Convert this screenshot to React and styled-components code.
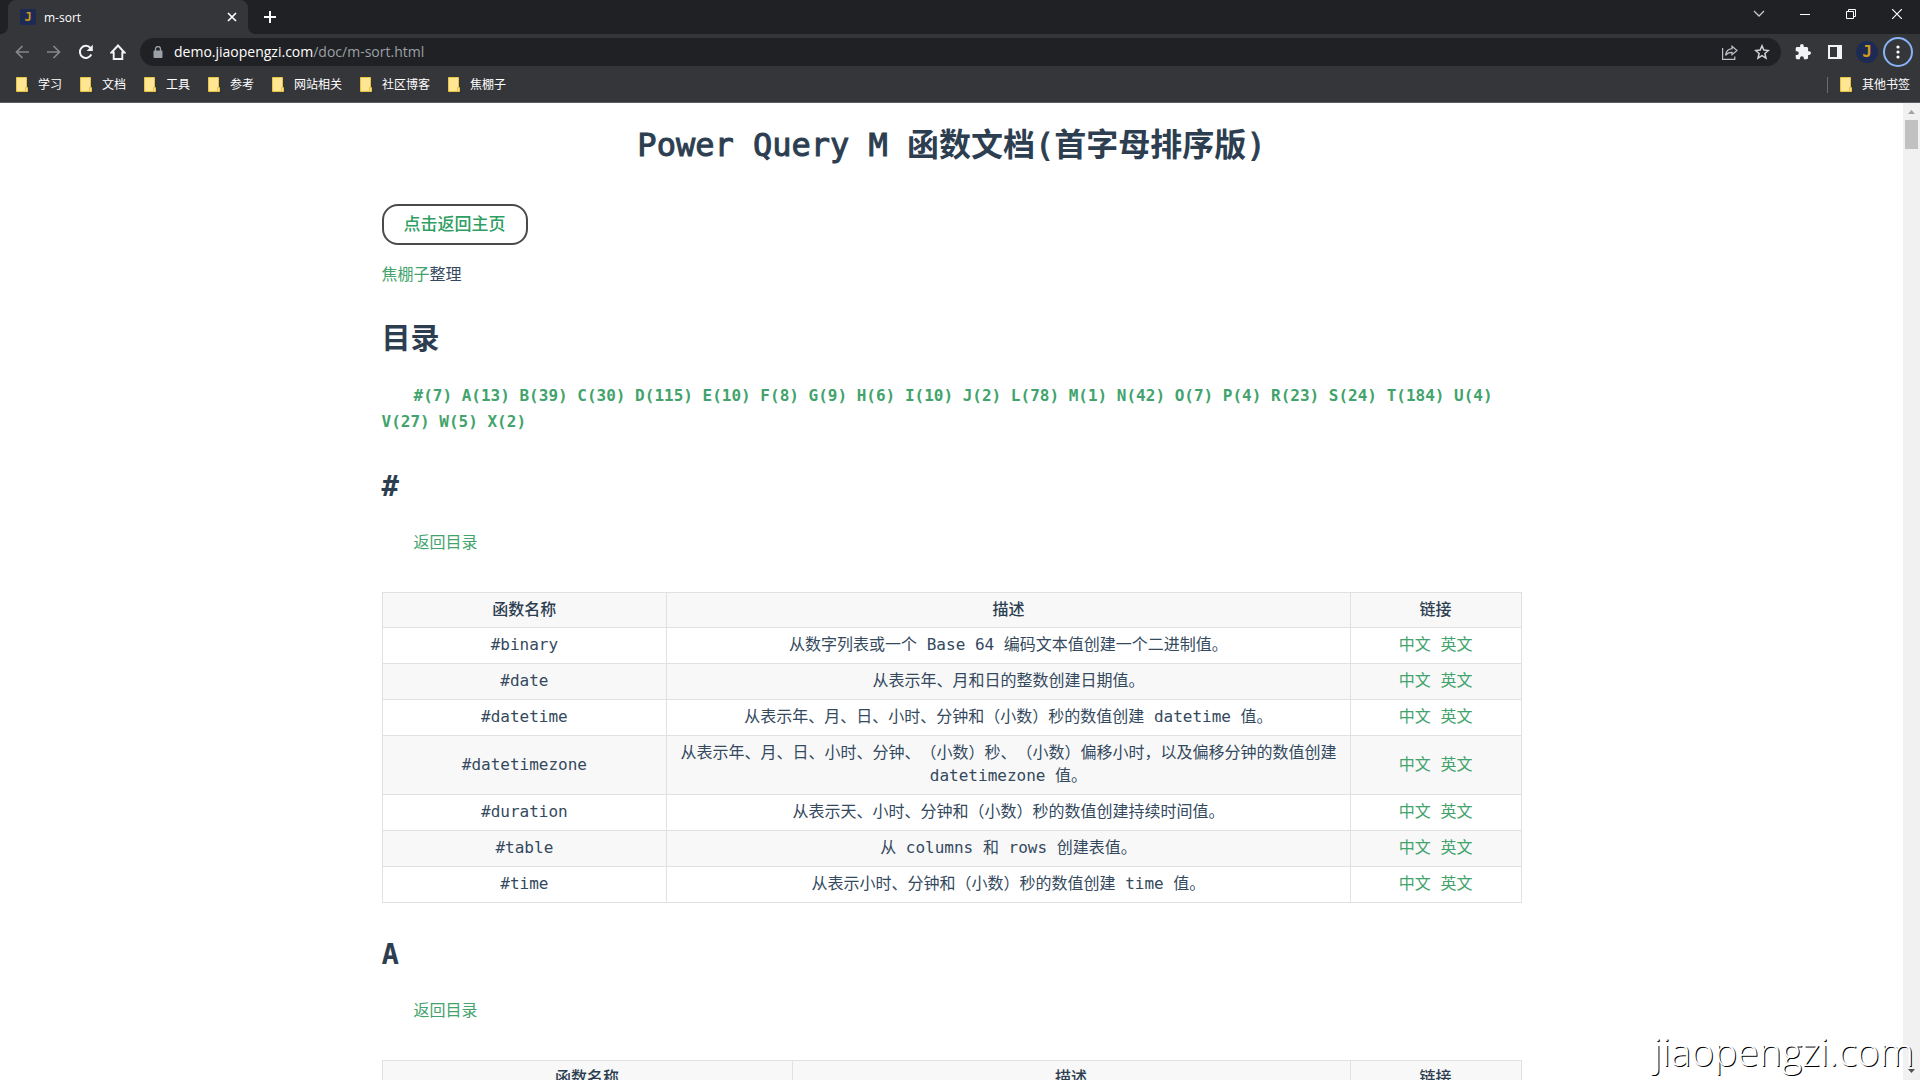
import React from 'react'
import styled, { createGlobalStyle } from 'styled-components';

const bookmarks = ['学习', '文档', '工具', '参考', '网站相关', '社区博客', '焦棚子'];

const toc = [
    '#(7)', 'A(13)', 'B(39)', 'C(30)', 'D(115)', 'E(10)', 'F(8)', 'G(9)', 'H(6)', 'I(10)', 'J(2)', 'L(78)',
    'M(1)', 'N(42)', 'O(7)', 'P(4)', 'R(23)', 'S(24)', 'T(184)', 'U(4)', 'V(27)', 'W(5)', 'X(2)'
];

const sections = [
    {
        letter: '#',
        columns: [25, 60, 15],
        rows: [
            ['#binary', '从数字列表或一个 Base 64 编码文本值创建一个二进制值。'],
            ['#date', '从表示年、月和日的整数创建日期值。'],
            ['#datetime', '从表示年、月、日、小时、分钟和（小数）秒的数值创建 datetime 值。'],
            ['#datetimezone', '从表示年、月、日、小时、分钟、（小数）秒、（小数）偏移小时，以及偏移分钟的数值创建 datetimezone 值。'],
            ['#duration', '从表示天、小时、分钟和（小数）秒的数值创建持续时间值。'],
            ['#table', '从 columns 和 rows 创建表值。'],
            ['#time', '从表示小时、分钟和（小数）秒的数值创建 time 值。']
        ]
    },
    {
        letter: 'A',
        columns: [36, 49, 15],
        rows: []
    }
];

const FolderIcon = () => (
    <svg width="12" height="15" viewBox="0 0 12 15" aria-hidden="true">
        <path d="M.5.5h10v10h1v4H.5z" fill="#ffe694" stroke="#e8c342" />
        <path d="M9.500 14v-3.500h1.500" fill="none" stroke="#e8c342" />
    </svg>
);

const TabStrip = () => (
    <Strip>
        <Tab>
            <Favicon>J</Favicon>
            <TabTitle>m-sort</TabTitle>
            <PlainButton aria-label="Close tab" $size={16}>
                <svg width="10" height="10" viewBox="0 0 10 10">
                    <path d="M1 1l8 8M9 1l-8 8" stroke="#fff" strokeWidth="1.700" />
                </svg>
            </PlainButton>
        </Tab>
        <NewTab aria-label="New tab">
            <svg width="12" height="12" viewBox="0 0 12 12">
                <path d="M6 0v12M0 6h12" stroke="#fff" strokeWidth="2" />
            </svg>
        </NewTab>
        <WindowControls>
            <WindowButton aria-label="Search tabs">
                <svg width="12" height="8" viewBox="0 0 12 8">
                    <path d="M1 1l5 5 5-5" fill="none" stroke="#c8c9ca" strokeWidth="1.300" />
                </svg>
            </WindowButton>
            <WindowButton aria-label="Minimize">
                <svg width="10" height="10" viewBox="0 0 10 10">
                    <path d="M0 5.500h10" stroke="#fff" />
                </svg>
            </WindowButton>
            <WindowButton aria-label="Restore">
                <svg width="10" height="10" viewBox="0 0 10 10">
                    <path d="M.5 2.500h7v7h-7zM2.500 2V.5h7v7H8" fill="none" stroke="#fff" />
                </svg>
            </WindowButton>
            <WindowButton aria-label="Close">
                <svg width="10" height="10" viewBox="0 0 10 10">
                    <path d="M0 0l10 10M10 0L0 10" stroke="#fff" strokeWidth="1.200" />
                </svg>
            </WindowButton>
        </WindowControls>
    </Strip>
);

const Toolbar = () => (
    <Bar>
        <PlainButton aria-label="Back" $size={32}>
            <svg width="14" height="14" viewBox="0 0 14 14">
                <path d="M14 7H1.500M7.500 1l-6 6 6 6" fill="none" stroke="#85878a" strokeWidth="1.700" />
            </svg>
        </PlainButton>
        <PlainButton aria-label="Forward" $size={32}>
            <svg width="14" height="14" viewBox="0 0 14 14">
                <path d="M0 7h12.500M6.500 1l6 6-6 6" fill="none" stroke="#85878a" strokeWidth="1.700" />
            </svg>
        </PlainButton>
        <PlainButton aria-label="Reload" $size={32}>
            <svg width="16" height="16" viewBox="0 0 16 16">
                <path d="M13.300 10.500A6 6 0 1 1 12.500 4" fill="none" stroke="#f1f3f4" strokeWidth="2" />
                <path d="M14.800.8v6.200H8.600z" fill="#f1f3f4" />
            </svg>
        </PlainButton>
        <PlainButton aria-label="Home" $size={32}>
            <svg width="16" height="16" viewBox="0 0 16 16">
                <path d="M1.500 8.500L8 1.500l6.500 7h-2.200V15H3.700V8.500z" fill="none" stroke="#f1f3f4" strokeWidth="1.900" />
            </svg>
        </PlainButton>
        <AddressBar>
            <svg width="10" height="12" viewBox="0 0 10 12" aria-hidden="true">
                <path d="M2.500 5V3a2.500 2.500 0 0 1 5 0v2" fill="none" stroke="#9aa0a6" strokeWidth="1.300" />
                <rect x="0.500" y="4.500" width="9" height="7.500" rx="1" fill="#9aa0a6" />
            </svg>
            <Address href="#top">demo.jiaopengzi.com<AddressPath>/doc/m-sort.html</AddressPath></Address>
            <PlainButton aria-label="Share" $size={32}>
                <svg width="16" height="15" viewBox="0 0 16 15">
                    <path d="M.6 3v11.400h12.200V11.500" fill="none" stroke="#bdc1c6" strokeWidth="1.200" />
                    <path d="M10 1.200L15 5.500l-5 4.300V7.400C7 7.300 5 8.200 3.500 10.300 4 6.500 6 4 10 3.600z" fill="none" stroke="#bdc1c6" strokeWidth="1.200" />
                </svg>
            </PlainButton>
            <PlainButton aria-label="Bookmark this page" $size={32}>
                <svg width="16" height="16" viewBox="0 0 16 16">
                    <path d="M8 1.800l1.800 4.300 4.600.4-3.500 3 1.100 4.600L8 11.700l-4 2.400 1.100-4.600-3.500-3 4.600-.4z" fill="none" stroke="#d0d2d5" strokeWidth="1.500" />
                </svg>
            </PlainButton>
        </AddressBar>
        <PlainButton aria-label="Extensions" $size={32}>
            <svg width="16" height="16" viewBox="1 1 22 22">
                <path d="M20.500 11H19V7c0-1.100-.9-2-2-2h-4V3.500a2.500 2.500 0 0 0-5 0V5H4c-1.100 0-2 .9-2 2v3.800h1.500a2.700 2.700 0 0 1 0 5.400H2V20c0 1.100.9 2 2 2h3.800v-1.500a2.700 2.700 0 0 1 5.400 0V22H17c1.100 0 2-.9 2-2v-4h1.500a2.500 2.500 0 0 0 0-5z" fill="#f1f3f4" />
            </svg>
        </PlainButton>
        <PlainButton aria-label="Side panel" $size={32}>
            <svg width="14" height="14" viewBox="0 0 14 14">
                <path d="M0 0h14v14H0zM2 2v10h7V2z" fill="#f1f3f4" fillRule="evenodd" />
            </svg>
        </PlainButton>
        <PlainButton aria-label="Profile" $size={32}>
            <Avatar>J</Avatar>
        </PlainButton>
        <MenuButton aria-label="Menu">
            <svg width="4" height="14" viewBox="0 0 4 14">
                <circle cx="2" cy="2" r="1.600" fill="#fff" />
                <circle cx="2" cy="7" r="1.600" fill="#fff" />
                <circle cx="2" cy="12" r="1.600" fill="#fff" />
            </svg>
        </MenuButton>
    </Bar>
);

const FunctionTable = ({ columns, rows }) => (
    <Table>
        <colgroup>
            {columns.map((width, i) => <col key={i} width={`${width}%`} />)}
        </colgroup>
        <thead>
            <tr>
                <HeadCell>函数名称</HeadCell>
                <HeadCell>描述</HeadCell>
                <HeadCell>链接</HeadCell>
            </tr>
        </thead>
        <tbody>
            {rows.map(([name, text]) => (
                <Row key={name}>
                    <Cell>{name}</Cell>
                    <Cell>{text}</Cell>
                    <Cell><Link href="#zh">中文</Link> <Link href="#en">英文</Link></Cell>
                </Row>
            ))}
        </tbody>
    </Table>
);

export default function App() {
    return (
        <Window>
            <GlobalStyle />
            <TabStrip />
            <Toolbar />
            <BookmarkBar>
                {bookmarks.map(name => (
                    <Bookmark key={name} href="#bookmark"><FolderIcon />{name}</Bookmark>
                ))}
                <OtherBookmarks>
                    <Bookmark href="#bookmark"><FolderIcon />其他书签</Bookmark>
                </OtherBookmarks>
            </BookmarkBar>
            <Viewport>
                <Page>
                    <Article>
                        <Title><Latin>Power Query M </Latin>函数文档<Latin>(</Latin>首字母排序版<Latin>)</Latin></Title>
                        <HomeButton>点击返回主页</HomeButton>
                        <Author><Link href="#author">焦棚子</Link>整理</Author>
                        <Heading id="toc">目录</Heading>
                        <Toc>
                            {toc.map(item => (
                                <React.Fragment key={item}><TocLink href={`#${item[0]}`}>{item}</TocLink>{' '}</React.Fragment>
                            ))}
                        </Toc>
                        {sections.map(({ letter, columns, rows }) => (
                            <section key={letter}>
                                <Heading>{letter}</Heading>
                                <BackLine><Link href="#toc">返回目录</Link></BackLine>
                                <FunctionTable columns={columns} rows={rows} />
                            </section>
                        ))}
                    </Article>
                </Page>
                <ScrollTrack>
                    <svg width="7" height="4" viewBox="0 0 7 4"><path d="M0 4l3.500-4L7 4z" fill="#a3a3a3" /></svg>
                    <ScrollThumb />
                    <svg width="7" height="4" viewBox="0 0 7 4"><path d="M0 0l3.500 4L7 0z" fill="#505050" /></svg>
                </ScrollTrack>
            </Viewport>
            <Watermark>jiaopengzi.com</Watermark>
        </Window>
    );
}

const GlobalStyle = createGlobalStyle`
    * {
        box-sizing: border-box;
    }

    body {
        margin: 0;
        overflow: hidden;
    }

    button {
        border: 0;
        padding: 0;
        background: none;
        font: inherit;
        cursor: pointer;
    }

    a {
        text-decoration: none;
    }
`;

const Window = styled.div`
    height: 100vh;
    display: flex;
    flex-direction: column;
    overflow: hidden;
    position: relative;
    background-color: #fff;
    font-family: "Open Sans", "Noto Sans CJK SC", sans-serif;
`;

const Strip = styled.header`
    height: 34px;
    flex: none;
    display: flex;
    align-items: stretch;
    padding-left: 8px;
    background-color: #202124;
`;

const Tab = styled.div`
    width: 240px;
    display: flex;
    align-items: center;
    padding: 0 8px 0 12px;
    border-radius: 8px 8px 0 0;
    background-color: #35363a;
    position: relative;

    /* curved feet where the tab meets the toolbar */
    &::before,
    &::after {
        content: "";
        position: absolute;
        bottom: 0;
        width: 8px;
        height: 8px;
    }

    &::before {
        right: 100%;
        background: radial-gradient(circle at 0 0, #202124 8px, #35363a 8px);
    }

    &::after {
        left: 100%;
        background: radial-gradient(circle at 100% 0, #202124 8px, #35363a 8px);
    }
`;

const Favicon = styled.span`
    width: 16px;
    height: 16px;
    border-radius: 2px;
    background-color: #1d2b54;
    color: #d09a1c;
    font: bold 12px/16px "DejaVu Sans Mono", monospace;
    text-align: center;
`;

const TabTitle = styled.span`
    flex: 1;
    padding-left: 8px;
    color: #fff;
    font-size: 12px;
    font-weight: 500;
`;

const PlainButton = styled.button`
    width: ${props => props.$size}px;
    height: ${props => props.$size}px;
    flex: none;
    display: flex;
    align-items: center;
    justify-content: center;
`;

const NewTab = styled.button`
    width: 44px;
    display: flex;
    align-items: center;
    justify-content: center;
`;

const WindowControls = styled.div`
    margin-left: auto;
    height: 28px;
    display: flex;
`;

const WindowButton = styled.button`
    width: 46px;
    display: flex;
    align-items: center;
    justify-content: center;
`;

const Bar = styled.nav`
    height: 36px;
    flex: none;
    display: flex;
    align-items: center;
    padding: 0 7px 0 6px;
    background-color: #35363a;
`;

const AddressBar = styled.div`
    flex: 1;
    height: 28px;
    display: flex;
    align-items: center;
    margin: 0 6px;
    padding: 0 3px 0 13px;
    border-radius: 14px;
    background-color: #202124;
`;

const Address = styled.a`
    flex: 1;
    padding: 0 0 1px 11px;
    color: #fff;
    font-size: 14px;
    line-height: 19px;
`;

const AddressPath = styled.span`
    color: #9aa0a6;
`;

const Avatar = styled.span`
    width: 22px;
    height: 22px;
    border-radius: 50%;
    background-color: #1d2b54;
    color: #d09a1c;
    font: bold 16px/22px "DejaVu Sans Mono", monospace;
`;

const MenuButton = styled.button`
    width: 30px;
    height: 30px;
    display: flex;
    align-items: center;
    justify-content: center;

    && {
        border: 2px solid #8ab4f8;
        border-radius: 50%;
    }
`;

const BookmarkBar = styled.nav`
    height: 33px;
    flex: none;
    display: flex;
    align-items: center;
    gap: 18px;
    padding: 0 10px 3px 16px;
    border-bottom: 1px solid #5c5d60;
    background-color: #35363a;
`;

const Bookmark = styled.a`
    display: flex;
    align-items: center;
    gap: 10px;
    color: #fff;
    font-size: 12px;
    line-height: 16px;
`;

const OtherBookmarks = styled.div`
    margin-left: auto;
    padding-left: 12px;
    border-left: 1px solid #6b6c6f;
`;

const Viewport = styled.div`
    flex: 1;
    min-height: 0;
    display: flex;
`;

const Page = styled.main`
    flex: 1;
    overflow: hidden;
    color: #34495e;
    font-family: "DejaVu Sans Mono", "Noto Sans CJK SC", monospace;
    font-size: 16px;
    line-height: 26px;
    text-spacing-trim: space-all;
`;

const Article = styled.article`
    max-width: 1140px;
    margin: 0 auto;
`;

const Title = styled.h1`
    margin: 18px 0 35px;
    color: #2c3e50;
    font-size: 32px;
    line-height: 48px;
    text-align: center;
`;

const Latin = styled.span`
    font-weight: normal;
    -webkit-text-stroke: 1px currentColor;
`;

const HomeButton = styled.button`
    display: block;
    height: 41px;

    && {
        padding: 0 20px 2px;
        border: 2px solid #4a4a4a;
        border-radius: 16px;
        color: #2f9e62;
        font-size: 17px;
        font-weight: 500;
    }
`;

const Author = styled.p`
    margin: 17px 0 0;
`;

const Heading = styled.h2`
    margin: 31px 0 24px;
    color: #2c3e50;
    font-size: 29px;
    line-height: 40px;
`;

const Toc = styled.p`
    margin: 0;
    text-indent: 32px;
`;

const Link = styled.a`
    color: #42a36c;
`;

const TocLink = styled(Link)`
    font-weight: bold;
`;

const BackLine = styled.p`
    margin: 0 0 36px;
    text-indent: 32px;
`;

const Table = styled.table`
    width: 100%;
    table-layout: fixed;
    border-collapse: collapse;
    line-height: 23px;
    text-align: center;
`;

const Cell = styled.td`
    padding: 5px 12px 7px;
    border: 1px solid #dfe2e5;
`;

const HeadCell = styled.th`
    padding: 5px 12px 6px;
    border: 1px solid #dfe2e5;
    background-color: #f8f8f8;
    color: #2c3e50;
    font-weight: 500;
`;

const Row = styled.tr`
    &:nth-child(2n) {
        background-color: #f8f8f8;
    }
`;

const ScrollTrack = styled.div`
    width: 17px;
    display: flex;
    flex-direction: column;
    align-items: center;
    padding: 7px 0;
    background-color: #f1f1f1;
`;

const ScrollThumb = styled.div`
    width: 13px;
    height: 29px;
    margin: 6px 0 auto;
    background-color: #c1c1c1;
`;

const Watermark = styled.div`
    position: absolute;
    right: 6px;
    bottom: 4px;
    color: #fff;
    font: 39px/50px "Open Sans", sans-serif;
    font-weight: 300;
    text-shadow: 1px 1px 0 #000;
`;
